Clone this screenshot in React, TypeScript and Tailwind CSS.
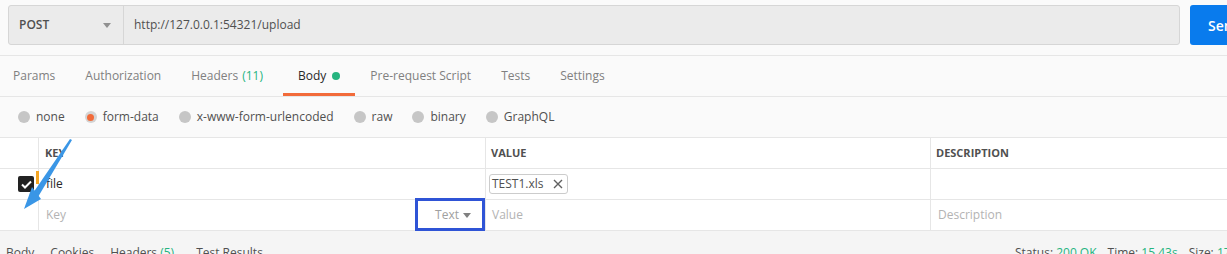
import React from "react";

const F = { fontFamily: '"Open Sans", "Liberation Sans", sans-serif' };

function Radio({ label, on }: { label: string; on?: boolean }) {
  return (
    <div className="flex items-center gap-[6px]">
      {on ? (
        <span className="w-[12px] h-[12px] rounded-full bg-[#d4d4d4] flex items-center justify-center">
          <span className="w-[7px] h-[7px] rounded-full bg-[#f26b3a]" />
        </span>
      ) : (
        <span className="w-[12px] h-[12px] rounded-full bg-[#c6c6c6]" />
      )}
      <span className="text-[12px] text-[#505050]">{label}</span>
    </div>
  );
}

export default function App() {
  return (
    <div style={F} className="w-[1227px] h-[254px] overflow-hidden bg-[#fafafa] relative">
      {/* URL bar */}
      <div className="h-[56px] border-b border-[#e6e6e6] flex items-start pt-[5px] pl-[8px] overflow-hidden">
        <div className="flex shrink-0 h-[40px] w-[1172px] rounded-[3px] border border-[#d6d6d6] bg-[#ebebeb]">
          <div className="w-[115px] border-r border-[#d6d6d6] flex items-center justify-between pl-[10px] pr-[12px]">
            <span className="text-[12px] text-[#505050] font-semibold">POST</span>
            <svg width="8" height="5" viewBox="0 0 8 5"><path d="M0 0h8L4 5z" fill="#909090" /></svg>
          </div>
          <div className="flex items-center pl-[10px] text-[12px] text-[#505050]">http://127.0.0.1:54321/upload</div>
        </div>
        <div className="shrink-0 ml-[10px] h-[40px] w-[70px] rounded-[3px] bg-[#097bed] flex items-center pl-[18px] text-white text-[14px] font-semibold">
          Send
        </div>
      </div>

      {/* Tabs */}
      <div className="h-[41px] border-b border-[#e6e6e6] flex items-stretch -ml-[2px] text-[12px]">
        <div className="px-[15px] flex items-center text-[#808080]">Params</div>
        <div className="px-[15px] flex items-center text-[#808080]">Authorization</div>
        <div className="pl-[15px] pr-[20px] flex items-center text-[#808080]">
          Headers <span className="ml-[4px] text-[#26b47f]">(11)</span>
        </div>
        <div className="px-[15px] flex items-center text-[#282828] relative">
          Body
          <span className="ml-[6px] w-[8px] h-[8px] rounded-full bg-[#26b47f]" />
          <span className="absolute left-0 right-0 bottom-[0px] h-[3px] bg-[#f26b3a]" />
        </div>
        <div className="px-[15px] flex items-center text-[#808080]">Pre-request Script</div>
        <div className="px-[15px] flex items-center text-[#808080]">Tests</div>
        <div className="px-[15px] flex items-center text-[#808080]">Settings</div>
      </div>

      {/* Body type radios */}
      <div className="h-[41px] border-b border-[#e6e6e6] flex items-center pl-[18px] gap-[20px]">
        <Radio label="none" />
        <Radio label="form-data" on />
        <Radio label="x-www-form-urlencoded" />
        <Radio label="raw" />
        <Radio label="binary" />
        <Radio label="GraphQL" />
      </div>

      {/* Table */}
      <div className="bg-white">
        <div className="grid grid-cols-[38px_447px_445px_1fr] h-[31px] border-b border-[#e6e6e6]">
          <div />
          <div className="border-l border-[#e6e6e6] flex items-center pl-[6px] text-[11px] font-bold text-[#505050]">KEY</div>
          <div className="border-l border-[#e6e6e6] flex items-center pl-[5px] text-[11px] font-bold text-[#505050]">VALUE</div>
          <div className="border-l border-[#e6e6e6] flex items-center pl-[5px] text-[11px] font-bold text-[#505050]">DESCRIPTION</div>
        </div>
        <div className="grid grid-cols-[38px_447px_445px_1fr] h-[31px] border-b border-[#e6e6e6]">
          <div className="flex items-center justify-end pr-[4px]">
            <span className="w-[16px] h-[16px] rounded-[2px] bg-[#222] flex items-center justify-center">
              <svg width="11" height="9" viewBox="0 0 11 9"><path d="M1 4.5l3 3L10 1.5" stroke="white" strokeWidth="2" fill="none" /></svg>
            </span>
          </div>
          <div className="border-l border-[#e6e6e6] flex items-center relative pl-[7px] text-[12px] text-[#282828]">
            <span className="absolute left-[-3px] top-[2px] w-[3px] h-[13px] bg-[#f5a623]" />
            file
          </div>
          <div className="border-l border-[#e6e6e6] flex items-center pl-[3px]">
            <span className="h-[20px] border border-[#cccccc] rounded-[3px] flex items-center pl-[2px] pr-[4px] text-[12px] text-[#505050]">
              TEST1.xls
              <svg className="ml-[9px]" width="10" height="10" viewBox="0 0 10 10"><path d="M1 1l8 8M9 1l-8 8" stroke="#606060" strokeWidth="1.4" /></svg>
            </span>
          </div>
          <div className="border-l border-[#e6e6e6]" />
        </div>
        <div className="grid grid-cols-[38px_447px_445px_1fr] h-[31px] border-b border-[#e6e6e6]">
          <div />
          <div className="border-l border-[#e6e6e6] flex items-center justify-between pl-[7px] pr-[14px] text-[12px] text-[#b3b3b3]">
            <span>Key</span>
            <span className="flex items-center gap-[4px] text-[#a0a0a0]">
              Text
              <svg width="8" height="5" viewBox="0 0 8 5"><path d="M0 0h8L4 5z" fill="#808080" /></svg>
            </span>
          </div>
          <div className="border-l border-[#e6e6e6] flex items-center pl-[6px] text-[12px] text-[#b3b3b3]">Value</div>
          <div className="border-l border-[#e6e6e6] flex items-center pl-[7px] text-[12px] text-[#b3b3b3]">Description</div>
        </div>
      </div>

      {/* Bottom response bar */}
      <div className="bg-[#f5f5f5] h-[40px] flex items-center pl-[6px] text-[12px] text-[#505050] pt-[4px] overflow-hidden">
        <div className="flex gap-[16px] w-[1009px] shrink-0">
          <span>Body</span>
          <span>Cookies</span>
          <span>Headers <span className="text-[#26b47f]">(5)</span></span>
          <span className="ml-[6px]">Test Results</span>
        </div>
        <div className="flex gap-[11px] shrink-0 whitespace-nowrap">
          <span>Status: <span className="text-[#26b47f]">200 OK</span></span>
          <span>Time: <span className="text-[#26b47f]">15.43s</span></span>
          <span>Size: <span className="text-[#26b47f]">17</span></span>
        </div>
      </div>

      {/* Annotations */}
      <div className="absolute left-[415px] top-[198px] w-[70px] h-[33px] border-[3px] border-[#2f54d6]" />
      <svg className="absolute left-0 top-0" width="100" height="230" viewBox="0 0 100 230">
        <path d="M70 139 L72 140 L38 197 L33 193 Z" fill="#3a96e6" />
        <path d="M24 209 L32 187 L41 199 Z" fill="#3a96e6" />
      </svg>
    </div>
  );
}
